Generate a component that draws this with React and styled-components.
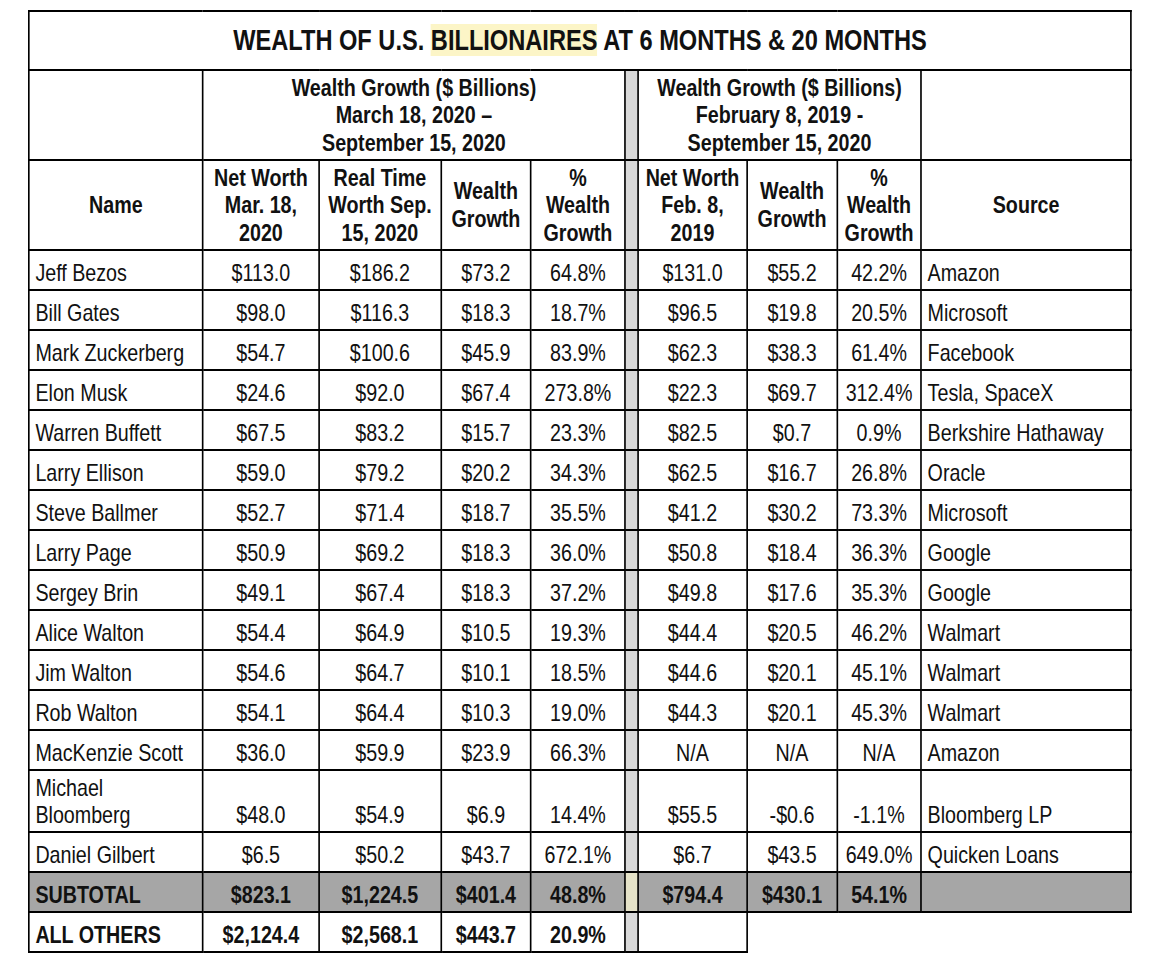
import React from "react";
import styled, { createGlobalStyle } from "styled-components";

const GlobalStyle = createGlobalStyle`
  body {
    margin: 0;
    background: #ffffff;
    font-family: "Liberation Sans", Arial, sans-serif;
    color: #111111;
    overflow: hidden;
  }
`;

// the sheet uses a narrow face; we draw the table wide and squeeze it
const SQUEEZE = 0.82;

const rows = [
  ["Jeff Bezos", "$113.0", "$186.2", "$73.2", "64.8%", "$131.0", "$55.2", "42.2%", "Amazon"],
  ["Bill Gates", "$98.0", "$116.3", "$18.3", "18.7%", "$96.5", "$19.8", "20.5%", "Microsoft"],
  ["Mark Zuckerberg", "$54.7", "$100.6", "$45.9", "83.9%", "$62.3", "$38.3", "61.4%", "Facebook"],
  ["Elon Musk", "$24.6", "$92.0", "$67.4", "273.8%", "$22.3", "$69.7", "312.4%", "Tesla, SpaceX"],
  ["Warren Buffett", "$67.5", "$83.2", "$15.7", "23.3%", "$82.5", "$0.7", "0.9%", "Berkshire Hathaway"],
  ["Larry Ellison", "$59.0", "$79.2", "$20.2", "34.3%", "$62.5", "$16.7", "26.8%", "Oracle"],
  ["Steve Ballmer", "$52.7", "$71.4", "$18.7", "35.5%", "$41.2", "$30.2", "73.3%", "Microsoft"],
  ["Larry Page", "$50.9", "$69.2", "$18.3", "36.0%", "$50.8", "$18.4", "36.3%", "Google"],
  ["Sergey Brin", "$49.1", "$67.4", "$18.3", "37.2%", "$49.8", "$17.6", "35.3%", "Google"],
  ["Alice Walton", "$54.4", "$64.9", "$10.5", "19.3%", "$44.4", "$20.5", "46.2%", "Walmart"],
  ["Jim Walton", "$54.6", "$64.7", "$10.1", "18.5%", "$44.6", "$20.1", "45.1%", "Walmart"],
  ["Rob Walton", "$54.1", "$64.4", "$10.3", "19.0%", "$44.3", "$20.1", "45.3%", "Walmart"],
  ["MacKenzie Scott", "$36.0", "$59.9", "$23.9", "66.3%", "N/A", "N/A", "N/A", "Amazon"],
  ["Michael Bloomberg", "$48.0", "$54.9", "$6.9", "14.4%", "$55.5", "-$0.6", "-1.1%", "Bloomberg LP"],
  ["Daniel Gilbert", "$6.5", "$50.2", "$43.7", "672.1%", "$6.7", "$43.5", "649.0%", "Quicken Loans"],
];

// widths on screen, between border centres
const colWidths = [174, 116, 122, 90, 94, 13, 109, 90, 84, 210];
const tableWidth = colWidths.reduce((a, b) => a + b, 0) + 2;

const Page = styled.div`
  padding: 10px 0 0 28px;
  width: 100%;
  box-sizing: border-box;
  overflow: hidden;
`;

const Table = styled.table`
  border-collapse: collapse;
  table-layout: fixed;
  width: ${tableWidth / SQUEEZE}px;
  font-size: 24px;
  line-height: 1.15;
  transform: scaleX(${SQUEEZE});
  transform-origin: left top;
`;

const Cell = styled.td`
  border-style: solid;
  border-color: #000000;
  border-width: 2px 2.4px;
  padding: 0 7px 2px 7px;
  text-align: ${(p) => (p.left ? "left" : "center")};
  vertical-align: bottom;
  font-weight: ${(p) => (p.bold ? "bold" : "normal")};
  white-space: nowrap;
`;

const NameCell = styled(Cell)`
  white-space: normal;
`;

const HeadCell = styled.th`
  border-style: solid;
  border-color: #000000;
  border-width: 2px 2.4px;
  padding: 0 4px;
  font-weight: bold;
  text-align: center;
  vertical-align: middle;
  white-space: nowrap;
`;

const Divider = styled.td`
  border-style: solid;
  border-color: #000000;
  border-width: 2px 2.4px;
  padding: 0;
  background: ${(p) => p.bg || "#d9d9d9"};
`;

const TitleCell = styled.th`
  border-style: solid;
  border-color: #000000;
  border-width: 2px 2.4px;
  height: 57px;
  font-size: 28.8px;
  font-weight: bold;
  text-align: center;
  vertical-align: middle;
  padding: 0;
`;

const Mark = styled.span`
  background: #fcf5c7;
`;

const HeadRow = styled.tr`
  height: 90px;
`;

const BodyRow = styled.tr`
  height: ${(p) => p.h || 40}px;
  background: ${(p) => p.bg || "transparent"};
`;

const App = () => {
  return (
    <Page>
      <GlobalStyle />
      <Table>
        <colgroup>
          {colWidths.map((w, i) => (
            <col key={i} style={{ width: w / SQUEEZE }} />
          ))}
        </colgroup>
        <thead>
          <tr>
            <TitleCell colSpan={10}>
              WEALTH OF U.S. <Mark>BILLIONAIRES</Mark> AT 6 MONTHS &amp; 20 MONTHS
            </TitleCell>
          </tr>
          <HeadRow>
            <HeadCell />
            <HeadCell colSpan={4}>
              Wealth Growth ($ Billions)
              <br />
              March 18, 2020 –
              <br />
              September 15, 2020
            </HeadCell>
            <Divider />
            <HeadCell colSpan={3}>
              Wealth Growth ($ Billions)
              <br />
              February 8, 2019 -
              <br />
              September 15, 2020
            </HeadCell>
            <HeadCell />
          </HeadRow>
          <HeadRow>
            <HeadCell>Name</HeadCell>
            <HeadCell>
              Net Worth
              <br />
              Mar. 18,
              <br />
              2020
            </HeadCell>
            <HeadCell>
              Real Time
              <br />
              Worth Sep.
              <br />
              15, 2020
            </HeadCell>
            <HeadCell>
              Wealth
              <br />
              Growth
            </HeadCell>
            <HeadCell>
              %
              <br />
              Wealth
              <br />
              Growth
            </HeadCell>
            <Divider />
            <HeadCell>
              Net Worth
              <br />
              Feb. 8,
              <br />
              2019
            </HeadCell>
            <HeadCell>
              Wealth
              <br />
              Growth
            </HeadCell>
            <HeadCell>
              %
              <br />
              Wealth
              <br />
              Growth
            </HeadCell>
            <HeadCell>Source</HeadCell>
          </HeadRow>
        </thead>
        <tbody>
          {rows.map((r) => (
            <BodyRow key={r[0]} h={r[0] === "Michael Bloomberg" ? 62 : 40}>
              <NameCell left>{r[0]}</NameCell>
              <Cell>{r[1]}</Cell>
              <Cell>{r[2]}</Cell>
              <Cell>{r[3]}</Cell>
              <Cell>{r[4]}</Cell>
              <Divider />
              <Cell>{r[5]}</Cell>
              <Cell>{r[6]}</Cell>
              <Cell>{r[7]}</Cell>
              <Cell left>{r[8]}</Cell>
            </BodyRow>
          ))}
          <BodyRow bg="#a6a6a6">
            <Cell left bold>SUBTOTAL</Cell>
            <Cell bold>$823.1</Cell>
            <Cell bold>$1,224.5</Cell>
            <Cell bold>$401.4</Cell>
            <Cell bold>48.8%</Cell>
            <Divider bg="#e6e3c8" />
            <Cell bold>$794.4</Cell>
            <Cell bold>$430.1</Cell>
            <Cell bold>54.1%</Cell>
            <Cell />
          </BodyRow>
          <BodyRow>
            <Cell left bold>ALL OTHERS</Cell>
            <Cell bold>$2,124.4</Cell>
            <Cell bold>$2,568.1</Cell>
            <Cell bold>$443.7</Cell>
            <Cell bold>20.9%</Cell>
            <Divider />
            <Cell />
          </BodyRow>
        </tbody>
      </Table>
    </Page>
  );
};

export default App;
